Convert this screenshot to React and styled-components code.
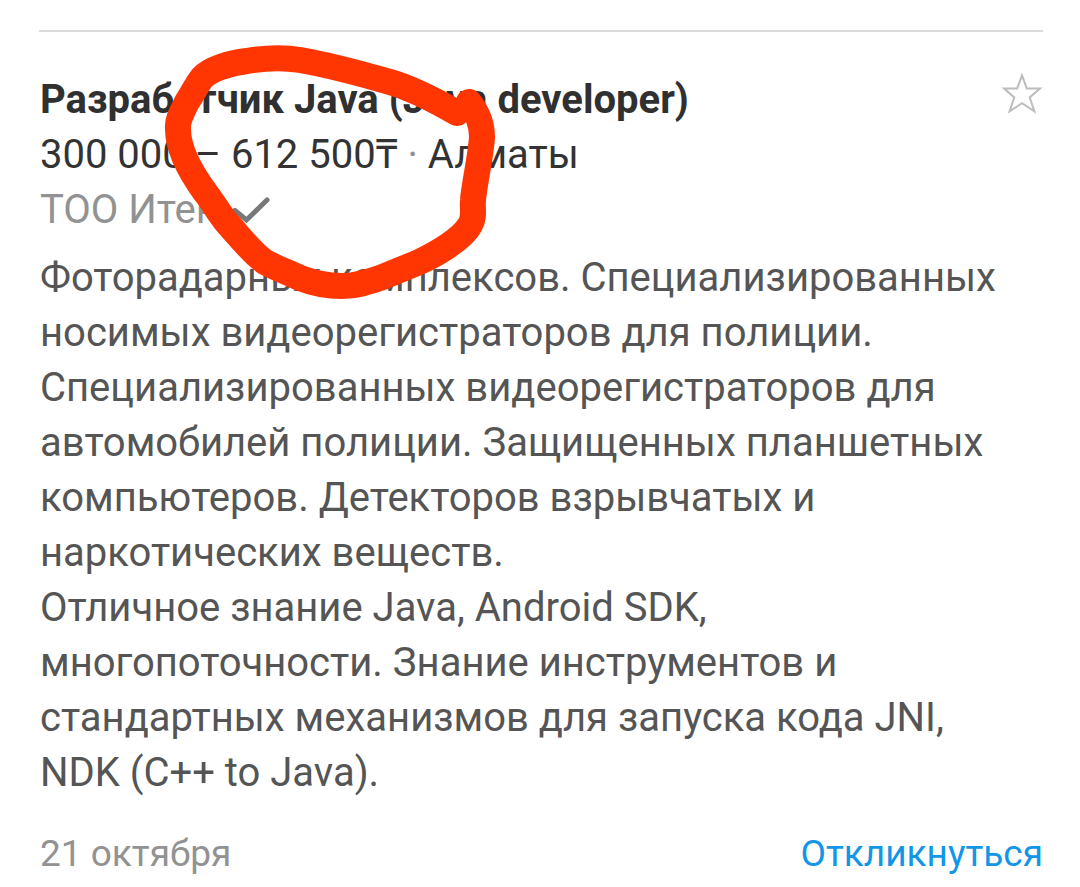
import React, { useState } from 'react';
import styled, { createGlobalStyle } from 'styled-components';

const vacancy = {
    title: 'Разработчик Java (Java developer)',
    salary: '300 000 – 612 500₸',
    city: 'Алматы',
    company: 'ТОО Итек',
    date: '21 октября',
    duties: 'Фоторадарных комплексов. Специализированных носимых видеорегистраторов для полиции. Специализированных видеорегистраторов для автомобилей полиции. Защищенных планшетных компьютеров. Детекторов взрывчатых и наркотических веществ.',
    skills: 'Отличное знание Java, Android SDK, многопоточности. Знание инструментов и стандартных механизмов для запуска кода JNI, NDK (C++ to Java).',
};

const VacancyCard = ({ item }) => {
    const [isSaved, setIsSaved] = useState(false);

    return (
        <Card>
            <Header>
                <Title>{item.title}</Title>
                <StarButton
                    type='button'
                    aria-label='В избранное'
                    aria-pressed={isSaved}
                    onClick={() => setIsSaved(!isSaved)}
                >
                    <svg width='42' height='42' viewBox='0 0 42 42' fill={isSaved ? '#bdbdbd' : 'none'} stroke='#bdbdbd' strokeWidth='2'>
                        <path d='M21 3.4L25.8 16.4H39L28.7 25.4L33.4 39.4L21 31.2L8.6 39.4L13.3 25.4L3 16.4H16.2Z' />
                    </svg>
                </StarButton>
            </Header>
            <Salary>
                {item.salary} <Dot>·</Dot> {item.city}
            </Salary>
            <Company>
                {item.company}
                <svg width='38' height='28' viewBox='0 0 38 28' fill='none' stroke='#77787a' strokeWidth='5' strokeLinecap='round' aria-hidden='true'>
                    <path d='M3 14.5L14.5 24L35 4' />
                </svg>
            </Company>
            <Description>
                <p>{item.duties}</p>
                <p>{item.skills}</p>
            </Description>
            <Footer>
                <span>{item.date}</span>
                <ReplyLink href='#reply'>Откликнуться</ReplyLink>
            </Footer>
            <Marker viewBox='0 0 340 264' aria-hidden='true'>
                <path d='M297 73C278 62 254 49 230 42C202 34 170 25 140 20C122 17 105 18 87 21C70 23 50 29 42 38C37 44 33 53 27 62C21 74 17 81 18 89C18 108 29 130 45 152C53 162 60 175 68 184C80 197 92 213 105 222C116 228 127 232 140 238C153 243 167 246 182 246C196 246 208 242 220 238L257 223C277 214 302 199 310 185C315 177 312 168 313 160C314 146 321 115 322 97C322 85 317 72 309 62' />
            </Marker>
        </Card>
    );
};

const App = () => (
    <>
        <GlobalStyle />
        <VacancyCard item={vacancy} />
    </>
);

const GlobalStyle = createGlobalStyle`
    body {
        margin: 0;
        background: #ffffff;
        font-family: Roboto, 'Noto Sans', sans-serif;
    }
`;

const Card = styled.article`
    position: relative;
    margin: 30px 37px 0 39px;
    padding: 40px 0 0 1px;
    border-top: 2px solid #dcdcdc;
    font-size: 40px;
    line-height: 55px;
    color: #303030;
`;

const Header = styled.header`
    display: flex;
    justify-content: space-between;
    align-items: flex-start;
`;

const Title = styled.h2`
    margin: 0;
    font-size: 40px;
    line-height: 55px;
    font-weight: 700;
`;

const StarButton = styled.button`
    padding: 0;
    border: 0;
    background: none;
    cursor: pointer;

    svg {
        display: block;
    }
`;

const Salary = styled.div`
    color: #333333;
`;

const Dot = styled.span`
    color: #8f8f8f;
`;

const Company = styled.div`
    display: flex;
    align-items: center;
    gap: 15px;
    color: #929292;
`;

const Description = styled.div`
    margin-top: 13px;
    padding-right: 20px;
    color: #555555;

    p {
        margin: 0;
    }
`;

const Footer = styled.footer`
    display: flex;
    justify-content: space-between;
    margin-top: 28px;
    font-size: 37px;
    line-height: 52px;
    color: #929292;
`;

const ReplyLink = styled.a`
    color: #1296e8;
    text-decoration: none;
`;

/* red marker stroke drawn over the salary */
const Marker = styled.svg`
    position: absolute;
    top: 8px;
    left: 121px;
    width: 340px;
    height: 264px;
    pointer-events: none;
    fill: none;
    stroke: #ff3502;
    stroke-width: 26;
    stroke-linecap: round;
    stroke-linejoin: round;
`;

export default App;
